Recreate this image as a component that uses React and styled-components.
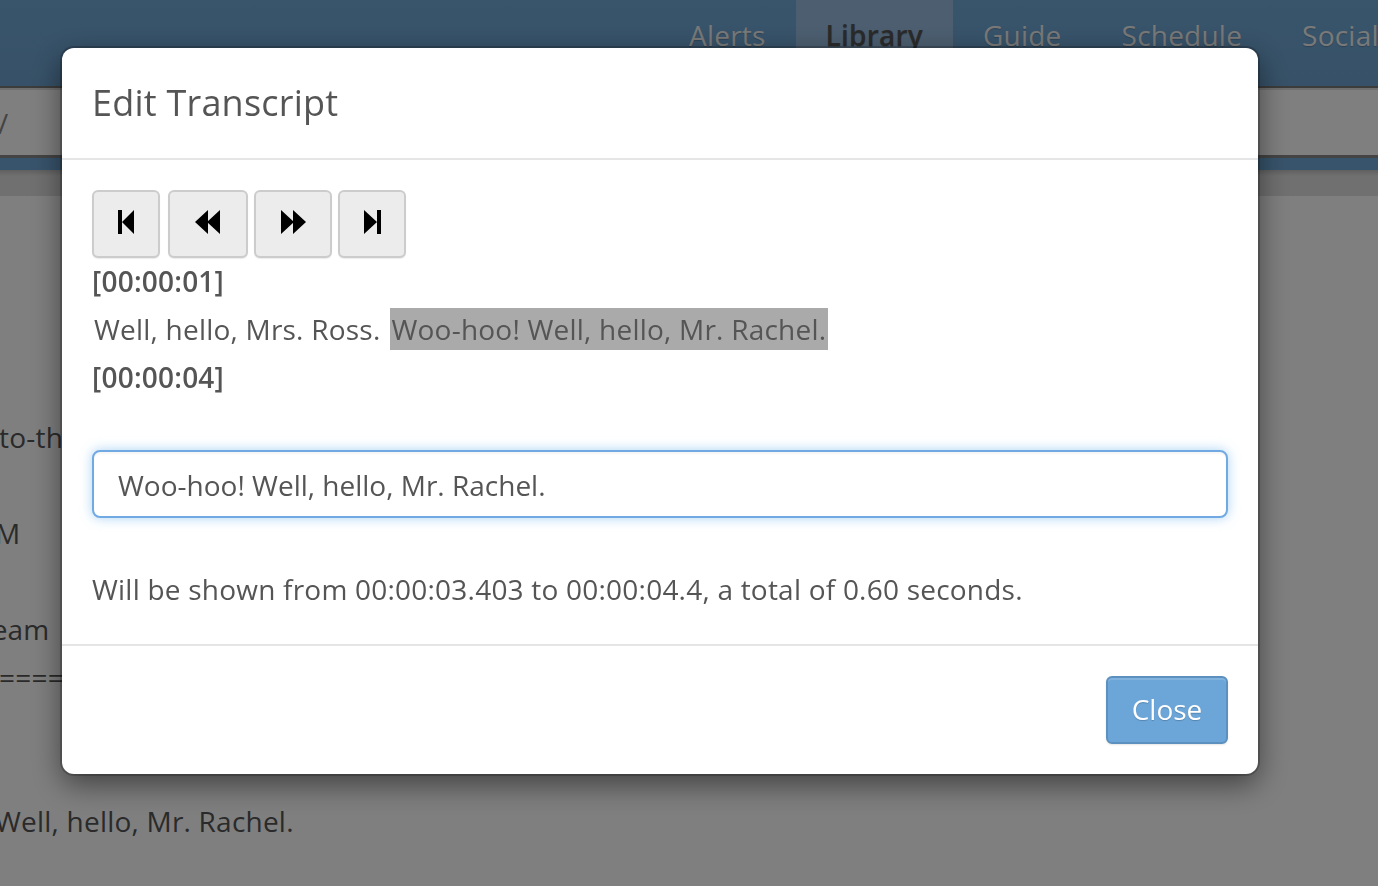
import React from "react";
import styled, { createGlobalStyle } from "styled-components";

const Global = createGlobalStyle`
  html, body { margin: 0; padding: 0; height: 100%; overflow: hidden; background: #fff; }
  body { font-family: "Open Sans", "DejaVu Sans", sans-serif; font-size: 28px; line-height: 46px; letter-spacing: 0.22px; color: #555; }
  * { box-sizing: border-box; }
`;

const Page = styled.div`
  width: 1378px;
  height: 886px;
  overflow: hidden;
`;
const Header = styled.header`
  height: 88px;
  background: linear-gradient(#70aad8 0, #6fa3d0 100%);
  border-bottom: 2px solid #787878;
  display: flex;
  padding-left: 659px;
  white-space: nowrap;
`;
const Tab = styled.a`
  flex: none;
  padding: 12px 30px 0;
  height: 86px;
  line-height: 46px;
  font-size: 28px;
  font-weight: ${(p) => (p.$active ? 600 : 400)};
  color: ${(p) => (p.$active ? "#555" : "#f2f2f2")};
  background: ${(p) => (p.$active ? "#98bde0" : "transparent")};
  text-shadow: 0 1px 1px rgba(0, 0, 0, 0.2);
`;
const SubBar = styled.div`
  height: 70px;
  background: #fff;
  border-bottom: 3px solid #888;
  box-shadow: inset 0 2px 0 #dedede;
  padding: 12px 0 0;
  overflow: hidden;
`;
const Crumb = styled.span`
  display: block;
  margin-left: -2px;
  color: #888;
`;
const Strip = styled.div`
  height: 12px;
  background: #70a8d8;
`;
const Content = styled.main`
  background: linear-gradient(#c0c0c0 0, #e0e0e0 6px, #e0e0e0 26px, #fff 26px);
  padding-top: 244px;
  white-space: nowrap;
`;
const Line = styled.div`
  height: 48px;
  margin-left: ${(p) => p.$shift || 0}px;
  margin-bottom: ${(p) => p.$after || 0}px;
`;

const Overlay = styled.div`
  position: fixed;
  inset: 0;
  background: rgba(0, 0, 0, 0.5);
`;
const Modal = styled.div`
  position: fixed;
  left: 62px;
  top: 48px;
  width: 1196px;
  background: #fff;
  border-radius: 12px;
  box-shadow: 0 0 0 2px rgba(0, 0, 0, 0.2), 0 10px 30px rgba(0, 0, 0, 0.5);
`;
const ModalHeader = styled.div`
  height: 112px;
  padding: 30px 30px 0;
  border-bottom: 2px solid #e5e5e5;
`;
const Title = styled.h4`
  margin: 0;
  font-size: 36px;
  font-weight: 400;
  line-height: 50px;
  color: #555;
`;
const ModalBody = styled.div`
  padding: 30px;
`;
const Toolbar = styled.div`
  display: flex;
  height: 68px;
`;
const IconButton = styled.button`
  flex: none;
  width: ${(p) => p.$w}px;
  height: 68px;
  margin-right: ${(p) => p.$gap || 0}px;
  padding: 0 ${(p) => p.$pr || 0}px 4px 0;
  display: flex;
  align-items: center;
  justify-content: center;
  background: #ececec;
  border: 2px solid #ccc;
  border-radius: 6px;
  box-shadow: 0 1px 1px rgba(0, 0, 0, 0.08);
`;
const Stamp = styled.div`
  font-weight: 600;
  height: 48px;
`;
const Cues = styled.div`
  height: 48px;
  padding-left: 2px;
  white-space: nowrap;
`;
const Cue = styled.span`
  display: inline-block;
  height: 42px;
  line-height: 42px;
  padding: 0 2px 0 1px;
  margin-right: 8px;
  vertical-align: top;
  margin-top: 2px;
  background: ${(p) => (p.$current ? "#aaaaaa" : "transparent")};
  margin-left: ${(p) => (p.$current ? "0" : "-1px")};
`;
const Field = styled.input`
  display: block;
  width: 100%;
  height: 68px;
  margin: 48px 0;
  padding: 2px 24px 0;
  font: inherit;
  letter-spacing: 0;
  color: #555;
  background: #fff;
  border: 2px solid #71a9e2;
  border-radius: 8px;
  outline: none;
  box-shadow: inset 0 2px 2px rgba(0, 0, 0, 0.04), 0 0 12px rgba(102, 175, 233, 0.55);
`;
const Info = styled.p`
  margin: 0;
  height: 48px;
`;
const ModalFooter = styled.div`
  display: flex;
  justify-content: flex-end;
  padding: 30px;
  border-top: 2px solid #e5e5e5;
`;
const CloseButton = styled.button`
  width: 122px;
  height: 68px;
  padding: 0 0 2px;
  font: inherit;
  color: #fff;
  background: #6ca6d9;
  border: 2px solid #5b90bf;
  border-radius: 6px;
  box-shadow: inset 0 2px 0 rgba(255, 255, 255, 0.15), 0 1px 2px rgba(0, 0, 0, 0.1);
  text-shadow: 0 1px 1px rgba(0, 0, 0, 0.2);
`;

const Glyph = ({ w, children }) => (
  <svg width={w} height="24" viewBox={`0 0 ${w} 24`} fill="#000" aria-hidden="true">
    <path d={children} />
  </svg>
);

export default function App() {
  return (
    <Page>
      <Global />
      <Header>
        <Tab>Alerts</Tab>
        <Tab $active>Library</Tab>
        <Tab>Guide</Tab>
        <Tab>Schedule</Tab>
        <Tab>Social</Tab>
      </Header>
      <SubBar>
        <Crumb>/</Crumb>
      </SubBar>
      <Strip />
      <Content>
        <Line $shift={-1} $after={48}>to-the-</Line>
        <Line $shift={-23} $after={48}>AM</Line>
        <Line $shift={-24}>Team</Line>
        <Line $shift={-1} $after={96}>==========</Line>
        <Line $shift={-5}>Well, hello, Mr. Rachel.</Line>
      </Content>
      <Overlay />
      <Modal>
        <ModalHeader>
          <Title>Edit Transcript</Title>
        </ModalHeader>
        <ModalBody>
          <Toolbar>
            <IconButton $w={68} $gap={8}>
              <Glyph w={16}>M0 0h4v24H0zM4 12 16 0v24z</Glyph>
            </IconButton>
            <IconButton $w={80} $gap={6} $pr={1}>
              <Glyph w={25}>M0 12 13 0v24zM12 12 25 0v24z</Glyph>
            </IconButton>
            <IconButton $w={78} $gap={6}>
              <Glyph w={25}>M0 0l13 12L0 24zM12 0l13 12-13 12z</Glyph>
            </IconButton>
            <IconButton $w={68}>
              <Glyph w={17}>M0 0l13 12L0 24zM13 0h4v24h-4z</Glyph>
            </IconButton>
          </Toolbar>
          <Stamp>[00:00:01]</Stamp>
          <Cues>
            <Cue>Well, hello, Mrs. Ross.</Cue>
            <Cue $current>Woo-hoo! Well, hello, Mr. Rachel.</Cue>
          </Cues>
          <Stamp>[00:00:04]</Stamp>
          <Field readOnly value="Woo-hoo! Well, hello, Mr. Rachel." />
          <Info>Will be shown from 00:00:03.403 to 00:00:04.4, a total of 0.60 seconds.</Info>
        </ModalBody>
        <ModalFooter>
          <CloseButton>Close</CloseButton>
        </ModalFooter>
      </Modal>
    </Page>
  );
}
